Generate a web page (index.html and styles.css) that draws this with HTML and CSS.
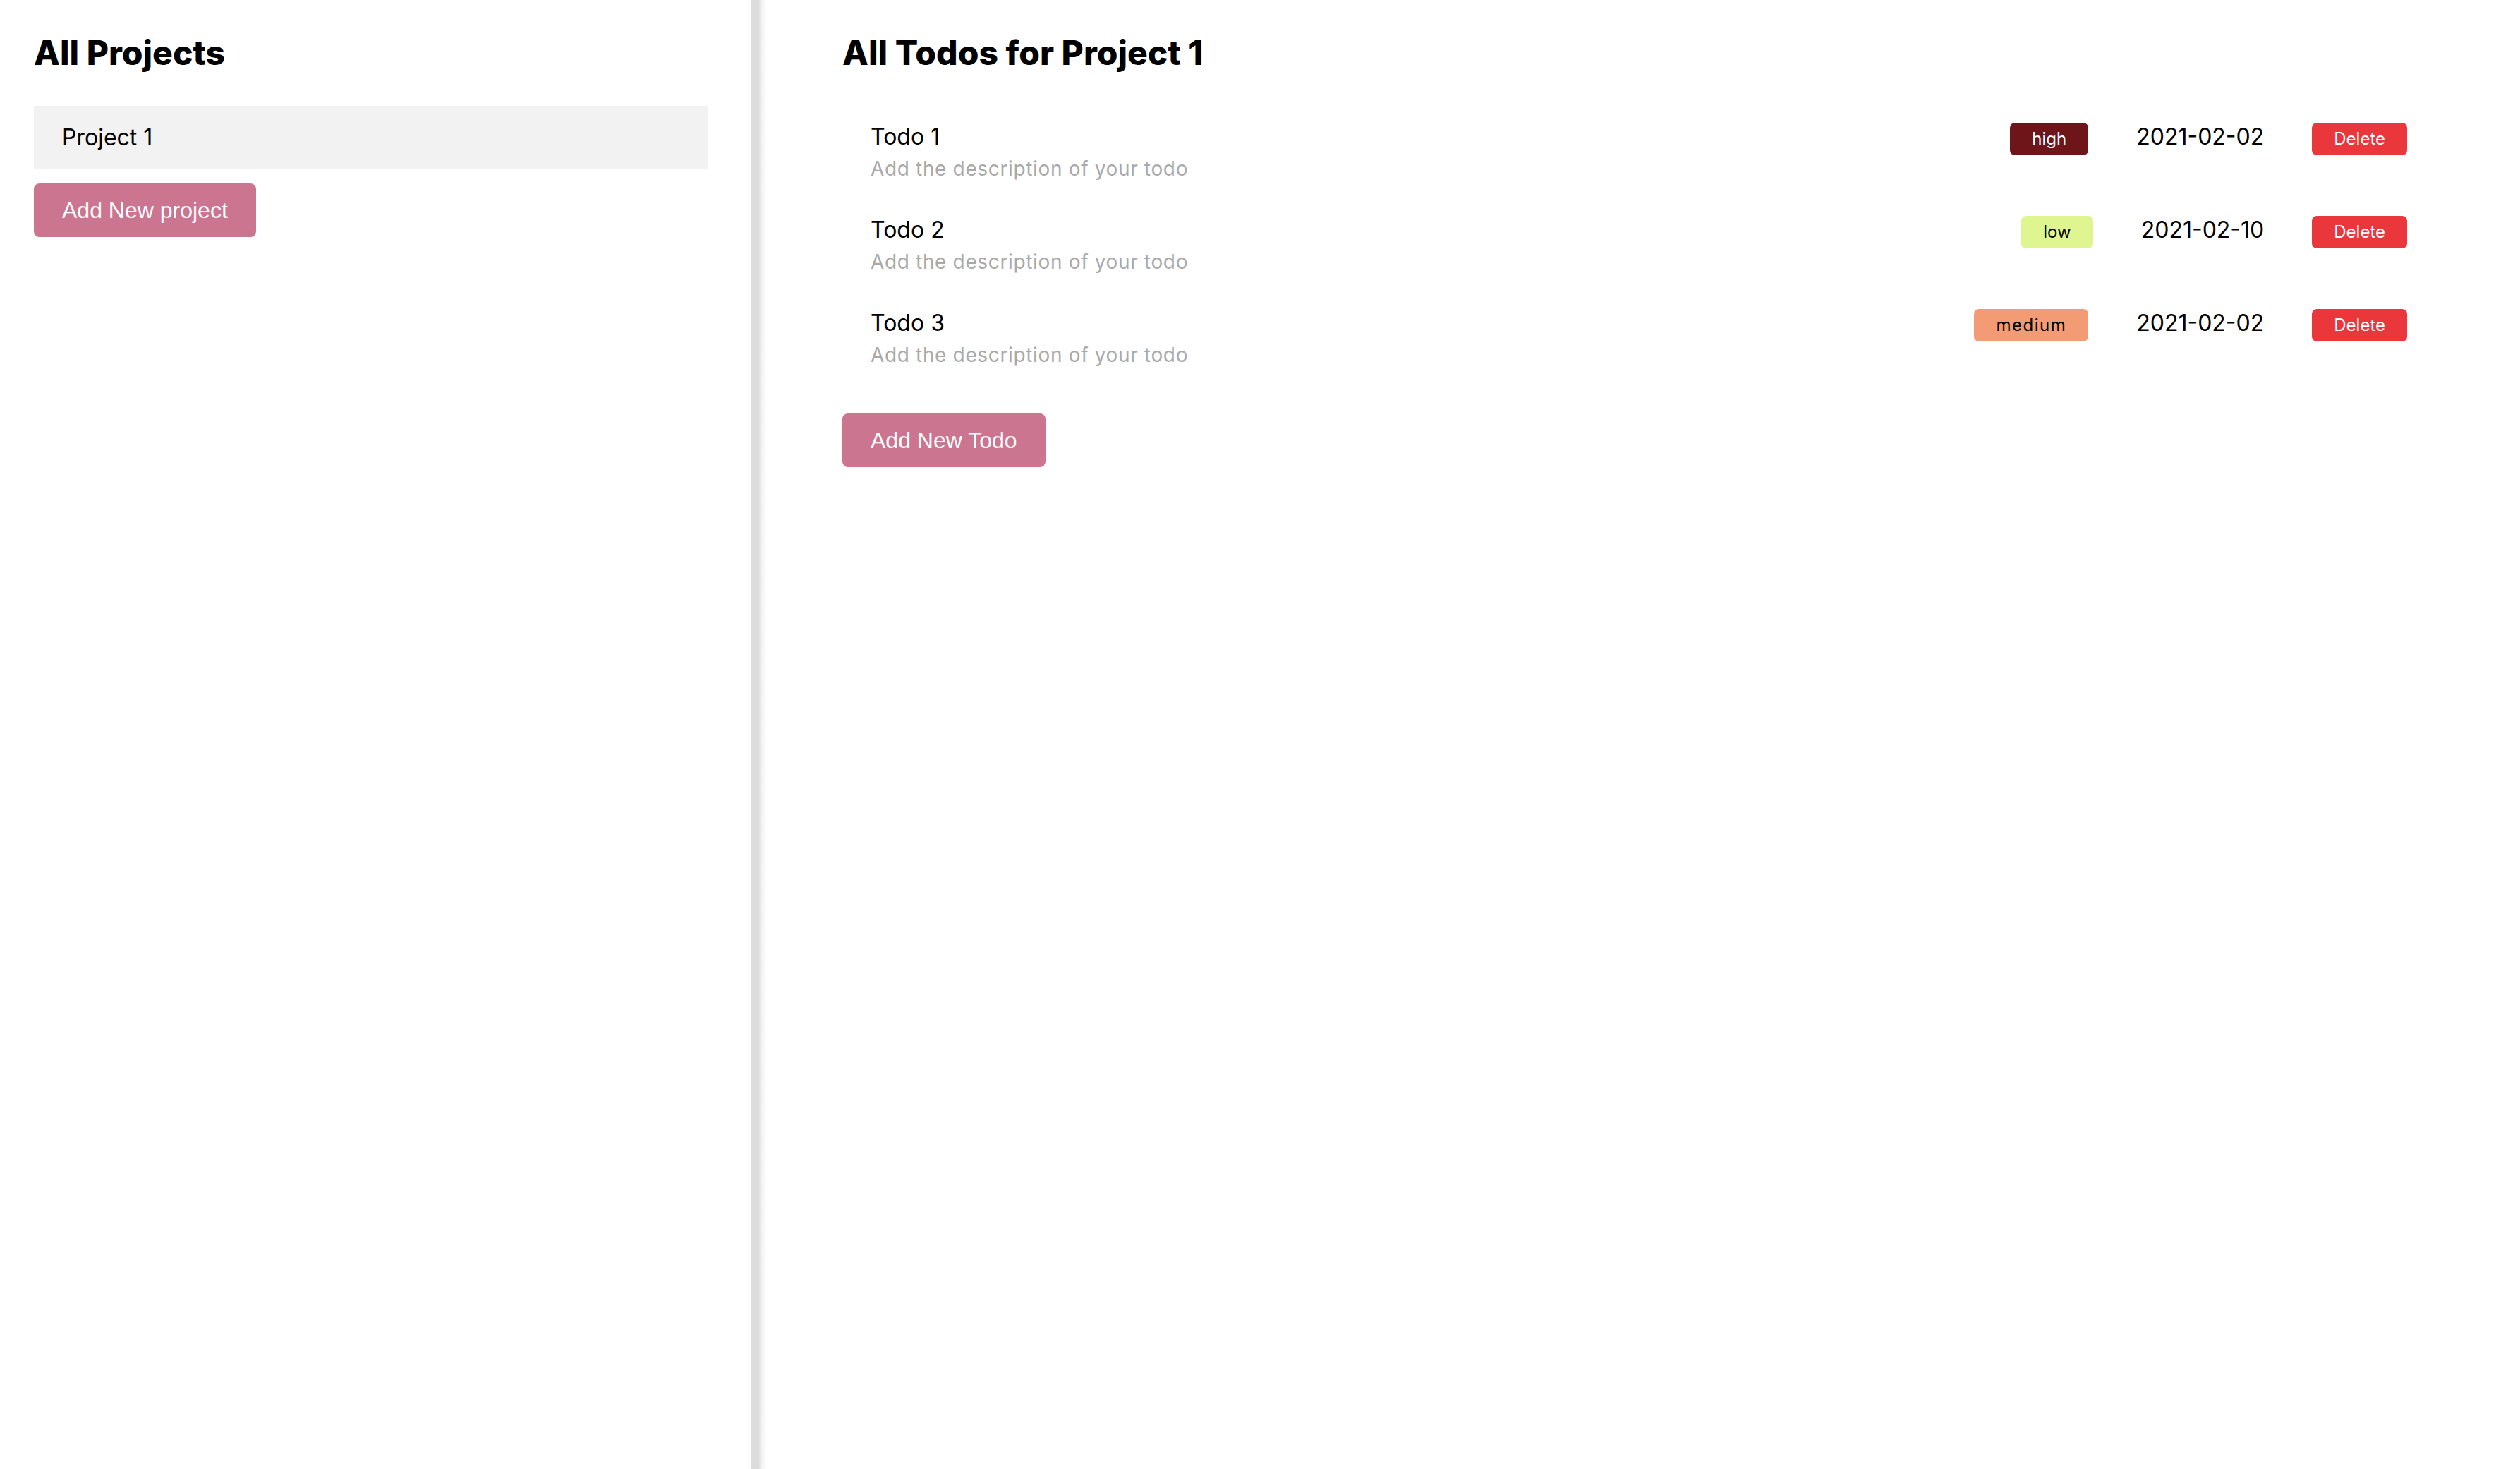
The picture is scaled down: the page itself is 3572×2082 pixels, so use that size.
FILE: index.html
```html
<!DOCTYPE html>
<html lang="en">
<head>
<meta charset="utf-8">
<title>Todos</title>
<link rel="stylesheet" href="styles.css">
</head>
<body>
<div class="app">
  <aside class="sidebar">
    <h1 class="page-title">All Projects</h1>
    <div class="project-item">Project 1</div>
    <button class="add-btn">Add New project</button>
  </aside>
  <div class="divider"></div>
  <main class="content">
    <h1 class="page-title">All Todos for Project 1</h1>
    <ul class="todos">
      <li class="todo">
        <div class="todo-text">
          <div class="todo-name">Todo 1</div>
          <div class="todo-desc">Add the description of your todo</div>
        </div>
        <div class="todo-meta">
          <span class="badge badge-high">high</span>
          <span class="date">2021-02-02</span>
          <button class="delete-btn">Delete</button>
        </div>
      </li>
      <li class="todo">
        <div class="todo-text">
          <div class="todo-name">Todo 2</div>
          <div class="todo-desc">Add the description of your todo</div>
        </div>
        <div class="todo-meta">
          <span class="badge badge-low">low</span>
          <span class="date">2021-02-10</span>
          <button class="delete-btn">Delete</button>
        </div>
      </li>
      <li class="todo">
        <div class="todo-text">
          <div class="todo-name">Todo 3</div>
          <div class="todo-desc">Add the description of your todo</div>
        </div>
        <div class="todo-meta">
          <span class="badge badge-medium">medium</span>
          <span class="date">2021-02-02</span>
          <button class="delete-btn">Delete</button>
        </div>
      </li>
    </ul>
    <button class="add-btn add-todo">Add New Todo</button>
  </main>
</div>
</body>
</html>
```
FILE: styles.css
```css
* { box-sizing: border-box; }

html, body {
  margin: 0;
  padding: 0;
  background: #ffffff;
}

body {
  font-family: "Inter", "Noto Sans", sans-serif;
  color: #000000;
}

.app {
  display: flex;
  min-height: 100vh;
}

.sidebar {
  width: 1064px;
  flex: 0 0 1064px;
  padding: 46px 60px 0 48px;
  display: flex;
  flex-direction: column;
  align-items: flex-start;
}

.divider {
  flex: 0 0 24px;
  background: linear-gradient(to right, #dcdcdc 0, #dcdcdc 11px, #f4f4f4 16px, #ffffff 24px);
}

.content {
  flex: 1;
  padding: 46px 120px 0 106px;
  display: flex;
  flex-direction: column;
  align-items: flex-start;
}

.page-title {
  margin: 0;
  font-size: 48px;
  line-height: 58px;
  font-weight: 800;
  letter-spacing: 0;
}

.project-item {
  align-self: stretch;
  margin-top: 46px;
  height: 90px;
  padding-left: 40px;
  background: #f2f2f2;
  font-size: 32px;
  line-height: 90px;
}

.add-btn {
  margin-top: 20px;
  height: 76px;
  padding: 0 40px;
  border: 0;
  border-radius: 8px;
  background: #cc7590;
  color: #ffffff;
  font-family: "Liberation Sans", Arial, sans-serif;
  font-size: 32px;
  line-height: 76px;
  cursor: pointer;
}

.todos {
  list-style: none;
  margin: 67px 0 0 0;
  padding: 0;
  align-self: stretch;
}

.todo {
  display: flex;
  justify-content: space-between;
  align-items: baseline;
  padding: 0 40px;
  margin-bottom: 42px;
}

.todo-name {
  font-size: 32px;
  line-height: 46px;
}

.todo-desc {
  font-size: 28px;
  line-height: 44px;
  letter-spacing: 0.65px;
  color: #a9a9a9;
}

.todo-meta {
  display: flex;
  align-items: baseline;
  gap: 68px;
}

.badge {
  display: inline-block;
  height: 46px;
  padding: 0 31px;
  border-radius: 7px;
  font-size: 24px;
  line-height: 46px;
}

.badge-high { background: #6e151a; color: #ffffff; }
.badge-low { background: #dff690; color: #000000; }
.badge-medium { background: #f29b75; color: #000000; letter-spacing: 1.5px; }

.date {
  font-size: 32px;
  line-height: 46px;
}

.delete-btn {
  height: 46px;
  padding: 0 31px;
  border: 0;
  border-radius: 7px;
  background: #e9373c;
  color: #ffffff;
  font-family: "Inter", "Noto Sans", sans-serif;
  font-size: 24px;
  line-height: 46px;
  cursor: pointer;
}

.add-todo {
  margin-top: 19px;
}
```
